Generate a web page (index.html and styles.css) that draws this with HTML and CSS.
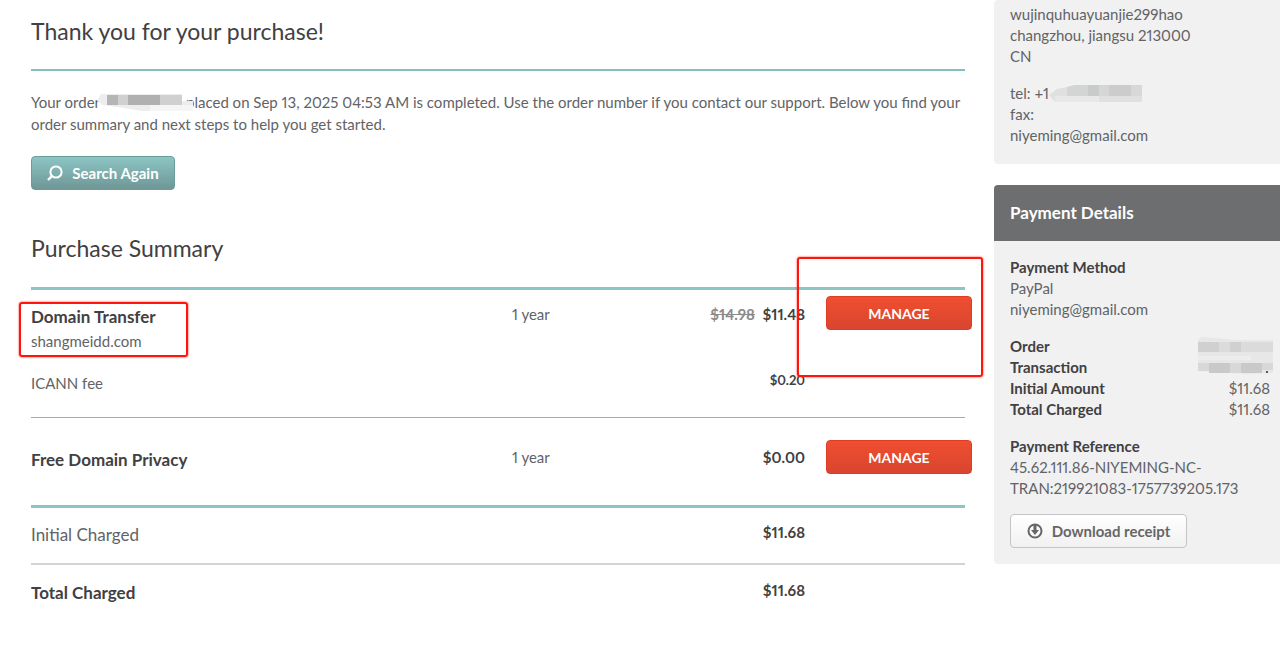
FILE: index.html
```html
<!DOCTYPE html>
<html lang="en">
<head>
    <meta charset="UTF-8">
    <meta name="viewport" content="width=device-width, initial-scale=1.0">
    <title>Purchase Summary</title>
    <link rel="stylesheet" href="styles.css">
</head>
<body>
    <div class="page">
        <main class="main">
            <h1>Thank you for your purchase!</h1>
            <p class="intro">Your order<svg class="mask mask-order" width="96" height="17" viewBox="0 0 96 17" aria-hidden="true">
                    <path fill="#ededed" d="M4 0H85V7H96V17H45L20 13L6 11L0 7Z"/>
                    <path fill="#b5b5b5" d="M10 1H21V11H10Z"/>
                    <path fill="#d0d0d0" d="M21 1H31V11H21Z"/>
                    <path fill="#b0b0b0" d="M31 1H63V11H31Z"/>
                    <path fill="#d0d0d0" d="M63 1H85V11H63Z"/>
                    <path fill="#f5f5f5" d="M53 11H96V17H53Z"/>
                </svg>placed on Sep 13, 2025 04:53 AM is completed. Use the order number if you contact our support. Below you find your order summary and next steps to help you get started.</p>
            <button type="button" class="btn btn-search">
                <svg width="16" height="16" viewBox="0 0 16 16" fill="none" stroke="#fff" stroke-width="2" aria-hidden="true">
                    <circle cx="9" cy="7" r="5.6"/>
                    <path d="M5 11L1 15" stroke-width="2.4"/>
                </svg>
                Search Again
            </button>

            <h2>Purchase Summary</h2>
            <table class="summary">
                <tbody>
                    <!-- Domain transfer -->
                    <tr class="line-teal">
                        <td class="item">
                            <strong>Domain Transfer</strong><br>
                            <span class="domain">shangmeidd.com</span>
                            <span class="highlight highlight-item"></span>
                        </td>
                        <td class="term">1 year</td>
                        <td class="price"><del>$14.98</del> $11.48</td>
                        <td class="action">
                            <button type="button" class="btn btn-manage">MANAGE</button>
                            <span class="highlight highlight-action"></span>
                        </td>
                    </tr>
                    <tr>
                        <td class="item fee">ICANN fee</td>
                        <td></td>
                        <td class="price fee-price">$0.20</td>
                        <td></td>
                    </tr>
                    <!-- Privacy -->
                    <tr class="line-gray tall">
                        <td class="item"><strong>Free Domain Privacy</strong></td>
                        <td class="term">1 year</td>
                        <td class="price">$0.00</td>
                        <td class="action"><button type="button" class="btn btn-manage">MANAGE</button></td>
                    </tr>
                    <!-- Totals -->
                    <tr class="line-teal">
                        <td class="item">Initial Charged</td>
                        <td></td>
                        <td class="price">$11.68</td>
                        <td></td>
                    </tr>
                    <tr class="line-light">
                        <td class="item"><strong>Total Charged</strong></td>
                        <td></td>
                        <td class="price">$11.68</td>
                        <td></td>
                    </tr>
                </tbody>
            </table>
        </main>

        <aside class="sidebar">
            <section class="panel contact">
                <p>wujinquhuayuanjie299hao<br>changzhou, jiangsu 213000<br>CN</p>
                <p>tel: +1<svg class="mask mask-tel" width="93" height="17" viewBox="0 0 93 17" aria-hidden="true">
                        <path fill="#e0e0e0" d="M0 10L8 4L18 2L26 0H93V17H6Z"/>
                        <path fill="#d3d4d4" d="M18 2L26 0H39V11H18Z"/>
                        <path fill="#c9cbcb" d="M39 0H50V11H39Z"/>
                        <path fill="#d6d6d6" d="M50 0H60V11H50Z"/>
                        <path fill="#cccccc" d="M60 0H82V11H60Z"/>
                        <path fill="#d8d8d8" d="M82 0H93V11H82Z"/>
                        <path fill="#e8e8e8" d="M6 11H50V17H6Z"/>
                    </svg><br>fax:<br>niyeming@gmail.com</p>
            </section>

            <section class="panel">
                <h3>Payment Details</h3>
                <div class="panel-body">
                    <p><strong>Payment Method</strong><br>PayPal<br>niyeming@gmail.com</p>
                    <dl>
                        <dt>Order</dt>
                        <dd>
                            <svg class="mask mask-ids" width="75" height="37" viewBox="0 0 75 37" aria-hidden="true">
                                <path fill="#e7e7e7" d="M0 3L4 0L40 3H75V36L50 37L0 34Z"/>
                                <path fill="#d0d0d0" d="M0 5H21V15H0ZM32 5H43V15H32Z"/>
                                <path fill="#dbdbdb" d="M21 5H32V15H21ZM43 5H75V15H43Z"/>
                                <path fill="#ededed" d="M0 19H53V23H0Z"/>
                                <path fill="#d8d8d8" d="M0 26H11V34H0ZM32 26H43V36H32ZM64 26H75V33H64Z"/>
                                <path fill="#c9c9c9" d="M11 26H32V36H11ZM43 26H64V36H43Z"/>
                                <path fill="#58595b" d="M68 34H70V36H68Z"/>
                            </svg>
                        </dd>
                        <dt>Transaction</dt>
                        <dd></dd>
                        <dt>Initial Amount</dt>
                        <dd>$11.68</dd>
                        <dt>Total Charged</dt>
                        <dd>$11.68</dd>
                    </dl>
                    <p><strong>Payment Reference</strong><br>45.62.111.86-NIYEMING-NC-<br>TRAN:219921083-1757739205.173</p>
                    <button type="button" class="btn btn-receipt">
                        <svg width="16" height="16" viewBox="0 0 16 16" aria-hidden="true">
                            <circle cx="8" cy="8" r="6.5" fill="none" stroke="#666" stroke-width="2"/>
                            <path fill="#666" d="M6.5 1H9.5V7H12L8 12L4 7H6.5Z"/>
                        </svg>
                        Download receipt
                    </button>
                </div>
            </section>
        </aside>
    </div>
</body>
</html>
```
FILE: styles.css
```css
* {
    box-sizing: border-box;
}
body {
    margin: 0;
    background-color: #fff;
    color: #626366;
    font-family: Lato, "Open Sans", sans-serif;
    font-size: 15px;
    font-variant-numeric: proportional-nums;
    line-height: 21px;
}
h1, h2, h3, p, dl, dd {
    margin: 0;
}
strong, dt {
    color: #414042;
    font-weight: bold;
}
.page {
    display: flex;
    align-items: flex-start;
    gap: 29px;
    padding-left: 31px;
}
.main {
    flex: 1;
    padding-top: 16px;
}
h1, h2 {
    color: #414042;
    font-size: 23px;
    font-weight: normal;
    line-height: 30px;
}
h1 {
    padding-bottom: 23px;
    border-bottom: 2px solid #82c0bf;
}
.intro {
    margin: 20px 0 21px;
    line-height: 22px;
}
h2 {
    margin: 43px 0 24px;
}

/* Buttons */
.btn {
    display: flex;
    align-items: center;
    justify-content: center;
    height: 34px;
    border-radius: 4px;
    font-family: inherit;
    font-size: 15px;
    font-weight: bold;
    cursor: pointer;
}
.btn-search {
    gap: 9px;
    width: 144px;
    padding: 0;
    border: 1px solid #6a9c9b;
    background: linear-gradient(#8cc5c4, #6f9796);
    color: #fff;
}
.btn-manage {
    width: 146px;
    border: 1px solid #dd3d25;
    background: linear-gradient(#f04e30, #d9452f);
    color: #fff;
    font-size: 14px;
}
.btn-receipt {
    gap: 9px;
    width: 177px;
    padding: 0;
    border: 1px solid #c4c4c4;
    background: linear-gradient(#fff, #f1f1f1);
    color: #666;
}

/* Summary table */
.summary {
    width: 100%;
    border-collapse: separate;
    border-spacing: 0;
    table-layout: fixed;
}
.summary td {
    padding: 16px 0;
    vertical-align: top;
}
.summary .item {
    position: relative;
    width: 481px;
    font-size: 17px;
    line-height: 24px;
}
.summary .domain, .summary .fee {
    font-size: 15px;
}
.term, .price {
    line-height: 18px;
}
.price {
    width: 180px;
    color: #414042;
    font-weight: bold;
    text-align: right;
}
.price del {
    margin-right: 4px;
    color: #8a8a8a;
}
.summary .fee-price {
    font-size: 13px;
}
.summary .line-teal td {
    padding-top: 15px;
    border-top: 3px solid #8cc5c4;
}
.summary .line-gray td {
    padding: 30px 0 33px;
    border-top: 1px solid #a7a9ac;
}
.summary .line-light td {
    border-top: 2px solid #d1d3d4;
}
.summary .action {
    position: relative;
    width: 160px;
}
.summary .line-teal .action {
    padding: 6px 0 0 21px;
}
.summary .line-gray .action {
    padding: 22px 0 0 21px;
}
.summary .fee {
    padding-bottom: 22px;
}
.summary tr:first-child td {
    padding-bottom: 2px;
}

/* Red marker frames */
.highlight {
    position: absolute;
    border: 2px solid #ff150c;
    border-radius: 3px;
    box-shadow: 0 0 2px #ff150c;
    pointer-events: none;
}
.highlight-item {
    top: 12px;
    left: -12px;
    width: 169px;
    height: 55px;
}
.highlight-action {
    top: -33px;
    left: -8px;
    width: 186px;
    height: 120px;
}

/* Sidebar */
.sidebar {
    width: 286px;
}
.panel {
    margin-bottom: 21px;
    border-radius: 4px 0 0 4px;
    background-color: #f1f1f1;
    overflow: hidden;
}
.contact {
    padding: 4px 16px 18px;
}
.contact p + p {
    margin-top: 16px;
}
h3 {
    padding: 0 16px;
    background-color: #6d6e70;
    color: #fff;
    font-size: 17px;
    line-height: 56px;
}
.panel-body {
    padding: 16px 10px 16px 16px;
}
dl {
    display: grid;
    grid-template-columns: 1fr auto;
    grid-auto-rows: 21px;
    margin: 16px 0;
}
dd {
    position: relative;
    text-align: right;
}
.btn-receipt {
    margin-top: 15px;
}

/* Blurred-out numbers */
.mask {
    position: relative;
    vertical-align: top;
}
.mask-order {
    margin: 3px -7px 0 -3px;
}
.mask-tel {
    margin-top: 2px;
}
.mask-ids {
    position: absolute;
    top: 1px;
    right: -3px;
}
```
